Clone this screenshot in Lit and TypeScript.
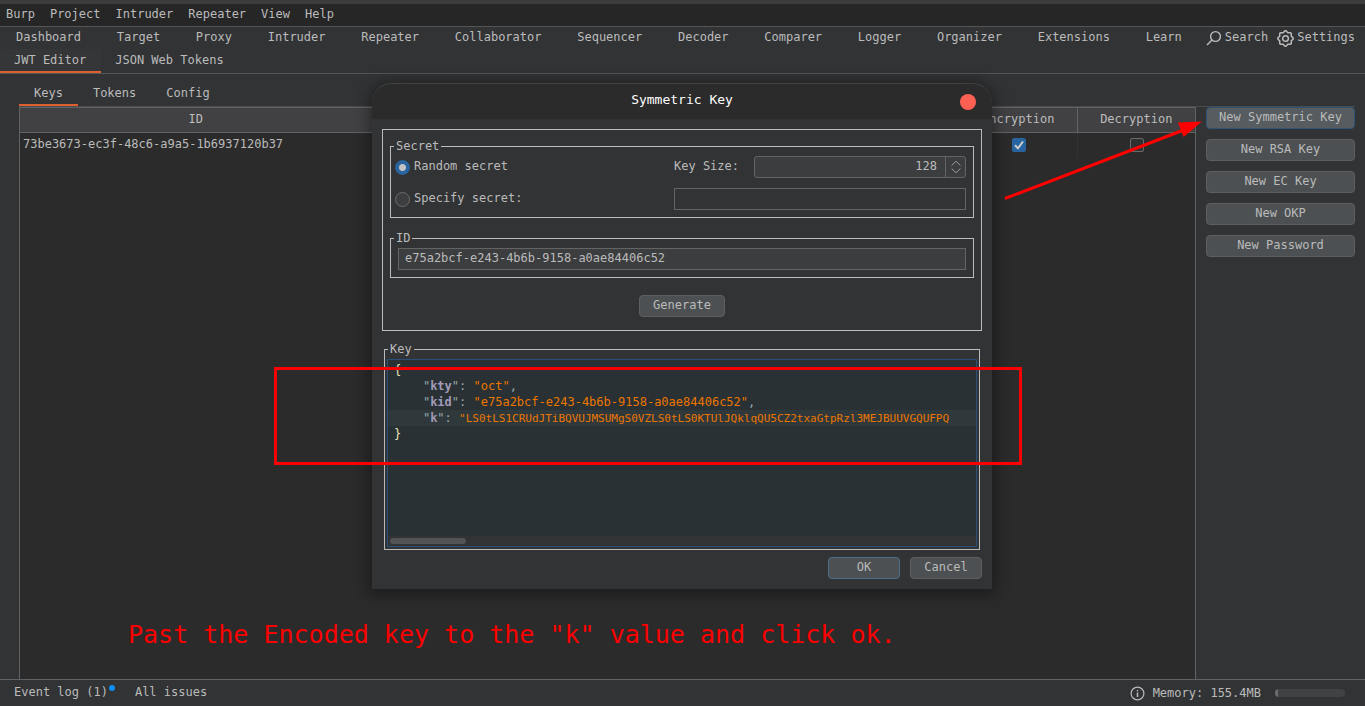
import { LitElement, html, css, svg } from "lit";
import { customElement, state } from "lit/decorators.js";

const MENUS = ["Burp", "Project", "Intruder", "Repeater", "View", "Help"];
const TOOLS = [
  "Dashboard", "Target", "Proxy", "Intruder", "Repeater", "Collaborator", "Sequencer",
  "Decoder", "Comparer", "Logger", "Organizer", "Extensions", "Learn",
];
const EXTENSION_TABS = ["JWT Editor", "JSON Web Tokens"];
const EDITOR_TABS = ["Keys", "Tokens", "Config"];
const NEW_KEY_BUTTONS = ["New Symmetric Key", "New RSA Key", "New EC Key", "New OKP", "New Password"];
const KEY_ID = "e75a2bcf-e243-4b6b-9158-a0ae84406c52";
const KEY_VALUE = "LS0tLS1CRUdJTiBQVUJMSUMgS0VZLS0tLS0KTUlJQklqQU5CZ2txaGtpRzl3MEJBUUVGQUFPQ";

// Eight-lobed cog outline around a 16px box.
const cogPath = (() => {
  const points: string[] = [];
  for (let i = 0; i <= 64; i++) {
    const a = (i / 64) * Math.PI * 2;
    const r = 6.6 + 0.7 * Math.cos(a * 8);
    points.push(`${(8 + r * Math.cos(a)).toFixed(2)} ${(8 + r * Math.sin(a)).toFixed(2)}`);
  }
  return `M${points.join("L")}Z`;
})();

const controls = css`
  * { box-sizing: border-box; }
  button, input {
    font: inherit;
    color: inherit;
    margin: 0;
  }
  .btn {
    height: 22px;
    padding: 0 0 2px;
    background: #4c5052;
    border: 1px solid #5e6060;
    border-radius: 4px;
  }
  .btn.focused {
    background: #565c5f;
    border-color: #2d5478;
  }
  .btn.default { border-color: #4c708c; }
`;

@customElement("key-dialog")
export class KeyDialog extends LitElement {
  static styles = [
    controls,
    css`
      :host {
        display: block;
        position: relative;
        width: 620px;
        background: #323335;
        border-radius: 20px 20px 0 0;
        box-shadow: 0 2px 14px 4px rgba(0, 0, 0, 0.34);
      }
      .title {
        display: grid;
        grid-template-columns: 1fr auto 1fr;
        align-items: center;
        height: 36px;
        padding: 0 16px;
        background: #2b2b2b;
        border-top: 1px solid #404242;
        border-radius: 20px 20px 0 0;
      }
      h1 {
        grid-column: 2;
        margin: 0;
        padding-bottom: 3px;
        font-size: 13px;
        line-height: 16px;
        font-weight: 400;
        color: #fff;
      }
      .close {
        justify-self: end;
        width: 16px;
        height: 16px;
        padding: 0;
        border: 0;
        border-radius: 50%;
        background: #ff6054;
      }
      .body { padding: 10px; }
      .panel {
        display: flex;
        flex-direction: column;
        padding: 9px 7px 13px;
        border: 1px solid #bbb;
      }
      fieldset {
        min-width: 0;
        margin: 0;
        padding: 2px 7px 7px 3px;
        border: 1px solid #bbb;
      }
      legend {
        padding: 0 2px;
        line-height: 15px;
      }
      .secret {
        display: grid;
        grid-template-columns: 1fr 80px 212px;
        row-gap: 10px;
        align-items: center;
      }
      .radio {
        display: flex;
        align-items: center;
        gap: 4px;
        padding-left: 1px;
      }
      .radio input {
        appearance: none;
        width: 15px;
        height: 15px;
        border: 1px solid #6b6b6b;
        border-radius: 50%;
        background: #3c3e3f;
      }
      .radio input:checked {
        border-color: #2a65a0;
        background: radial-gradient(circle, #c4c4c4 3px, #2a65a0 4px);
      }
      .radio span, .label { padding-bottom: 2px; line-height: 16px; }
      .spinner {
        display: flex;
        height: 22px;
        border: 1px solid #646464;
        border-radius: 3px;
        background: #3c3d3f;
      }
      .spinner input {
        flex: 1;
        min-width: 0;
        padding: 0 8px 2px;
        border: 0;
        background: none;
        text-align: right;
      }
      .steps {
        display: grid;
        place-items: center;
        width: 20px;
        padding: 0;
        border: 0;
        border-left: 1px solid #646464;
        background: none;
      }
      .field {
        display: block;
        width: 100%;
        height: 22px;
        padding: 0 6px 2px;
        border: 1px solid #646464;
        border-radius: 0;
        background: #3c3d3f;
      }
      .field.disabled {
        grid-column: 2 / 4;
        background: #323335;
      }
      .id { margin-top: 13px; }
      .id .wrap { padding-left: 4px; }
      .generate {
        align-self: center;
        width: 86px;
        margin-top: 17px;
      }
      .key {
        margin: 11px 2px 0;
        padding: 2px;
      }
      .key legend { margin-left: 1px; }
      .editor {
        border: 1px solid #28507a;
        background: #293134;
      }
      .code {
        height: 176px;
        padding-top: 2px;
        overflow: hidden;
        font: 12px/16px "DejaVu Sans Mono", monospace;
        white-space: pre;
        color: #9aa8b0;
        outline: none;
      }
      .line { height: 16px; padding-left: 6px; overflow: hidden; }
      .line.current { background: #2f393c; }
      .brace { color: #e8e2b7; }
      .name { color: #a29ab8; font-weight: 700; }
      .value { color: #ec7600; }
      .value.long { font-size: 11px; }
      .track {
        height: 10px;
        padding: 2px;
        background: #323335;
      }
      .thumb {
        width: 76px;
        height: 6px;
        border-radius: 3px;
        background: #525355;
      }
      .actions {
        display: flex;
        justify-content: flex-end;
        gap: 10px;
        margin-top: 7px;
      }
      .actions .btn { width: 72px; }
      .highlight {
        position: absolute;
        top: 284px;
        left: -98px;
        right: -30px;
        height: 98px;
        border: 3px solid #fb0000;
        pointer-events: none;
      }
    `,
  ];

  render() {
    return html`
      <header class="title">
        <h1>Symmetric Key</h1>
        <button class="close" aria-label="Close"></button>
      </header>
      <div class="body">
        <div class="panel">
          <fieldset>
            <legend>Secret</legend>
            <div class="secret">
              <label class="radio"><input type="radio" name="secret" checked /><span>Random secret</span></label>
              <label class="label" for="size">Key Size:</label>
              <div class="spinner">
                <input id="size" type="text" inputmode="numeric" .value=${"128"} />
                <button class="steps" aria-label="Change key size">
                  <svg width="10" height="14" viewBox="0 0 10 14" fill="none" stroke="#a0a0a0">
                    <path d="M.7 5.500 5 1.200 9.300 5.500M.7 8.500 5 12.800 9.300 8.500" />
                  </svg>
                </button>
              </div>
              <label class="radio"><input type="radio" name="secret" /><span>Specify secret:</span></label>
              <input class="field disabled" type="text" aria-label="Specify secret" disabled />
            </div>
          </fieldset>
          <fieldset class="id">
            <legend>ID</legend>
            <div class="wrap"><input class="field" type="text" aria-label="ID" .value=${KEY_ID} /></div>
          </fieldset>
          <button class="btn generate">Generate</button>
        </div>
        <fieldset class="key">
          <legend>Key</legend>
          <div class="editor">
            <div class="code" role="textbox" aria-multiline="true" aria-label="Key" contenteditable="true" spellcheck="false"
              ><div class="line"><span class="brace">{</span></div
              ><div class="line">    "<span class="name">kty</span>": <span class="value">"oct"</span>,</div
              ><div class="line">    "<span class="name">kid</span>": <span class="value">"${KEY_ID}"</span>,</div
              ><div class="line current">    "<span class="name">k</span>": <span class="value long">"${KEY_VALUE}</span></div
              ><div class="line"><span class="brace">}</span></div
            ></div>
            <div class="track"><div class="thumb"></div></div>
          </div>
        </fieldset>
        <div class="actions">
          <button class="btn default">OK</button>
          <button class="btn">Cancel</button>
        </div>
      </div>
      <div class="highlight"></div>
    `;
  }
}

@customElement("app-root")
export class AppRoot extends LitElement {
  static styles = [
    controls,
    css`
      :host {
        display: flex;
        flex-direction: column;
        position: relative;
        height: 100vh;
        overflow: hidden;
        border-top: 4px solid #3c3c3c;
        box-sizing: border-box;
        background: #323335;
        color: #bbb;
        font: 12px/16px "DejaVu Sans Mono", monospace;
      }
      button { cursor: default; }
      .menus, .tools, .tabs, .editor-tabs, .status {
        display: flex;
        align-items: center;
      }
      .menus button, .tools button, .tabs button, .editor-tabs button, .status button {
        padding: 0;
        border: 0;
        background: none;
        white-space: nowrap;
      }
      .menus {
        gap: 15px;
        height: 23px;
        padding: 0 6px 2px;
        background: #262626;
        border-bottom: 1px solid #555;
      }
      .tools { height: 22px; }
      .tool-list {
        display: flex;
        flex: 1;
        justify-content: space-between;
        padding: 0 24px 2px 16px;
      }
      .side-tools {
        display: flex;
        gap: 9px;
        padding-right: 10px;
      }
      .side-tools button {
        display: flex;
        align-items: center;
        gap: 3px;
      }
      .side-tools span { padding-bottom: 2px; }
      .tabs {
        align-items: stretch;
        height: 25px;
        border-bottom: 1px solid #555;
      }
      .tabs button {
        padding: 0 15px 0 14px;
        border-bottom: 2px solid transparent;
      }
      .tabs button.active {
        border-color: #dd6031;
        background: #353638;
      }
      .workspace {
        display: flex;
        flex: 1;
        flex-direction: column;
        min-height: 0;
        padding-left: 19px;
      }
      .editor-tabs {
        align-items: stretch;
        height: 33px;
        margin-right: 10px;
        padding-top: 8px;
        border-bottom: 1px solid #4a4b4d;
      }
      .editor-tabs button {
        padding: 0 15px;
        border-bottom: 2px solid transparent;
      }
      .editor-tabs button.active { border-color: #dd6031; }
      .content { display: flex; flex: 1; }
      .keys {
        flex: 1;
        border: 1px solid #606264;
        border-bottom: 0;
        background: #2b2b2b;
      }
      table {
        width: 100%;
        table-layout: fixed;
        border-collapse: separate;
        border-spacing: 0;
      }
      th, td {
        height: 25px;
        padding: 0 0 2px;
        border-right: 1px solid #333;
        font-weight: 400;
        line-height: 16px;
        text-align: center;
      }
      th {
        background: #414143;
        border-right-color: #606264;
        border-bottom: 1px solid #606264;
      }
      th:last-child, td:last-child { border-right: 0; }
      th:first-child { width: 30%; }
      td:first-child { padding: 0 0 4px 3px; text-align: left; }
      .tick {
        appearance: none;
        display: block;
        width: 14px;
        height: 14px;
        margin: 1px auto 0;
        border: 1px solid #6b6b6b;
        border-radius: 2px;
        background: #303132;
      }
      .tick:checked {
        border-color: #2865a0;
        background: #2865a0;
      }
      .tick-box { position: relative; margin-left: 2px; }
      .tick-box svg {
        position: absolute;
        inset: 0;
        margin: auto;
        pointer-events: none;
      }
      aside {
        position: relative;
        display: flex;
        flex-direction: column;
        gap: 10px;
        width: 169px;
        padding: 0 10px;
      }
      .arrow {
        position: absolute;
        top: 12px;
        right: 160px;
        pointer-events: none;
      }
      .status {
        height: 27px;
        padding: 0 20px 0 14px;
        border-top: 1px solid #606264;
      }
      .issues {
        display: flex;
        flex: 1;
        gap: 27px;
        padding-bottom: 2px;
      }
      .badge-host { position: relative; }
      .dot {
        position: absolute;
        top: 1px;
        right: -7px;
        width: 6px;
        height: 6px;
        border-radius: 50%;
        background: #0a8df5;
      }
      .memory { display: flex; align-items: center; gap: 8px; }
      .meter {
        width: 70px;
        height: 8px;
        margin-left: 6px;
        border-radius: 4px;
        overflow: hidden;
        background: #414244;
      }
      .meter div { height: 100%; width: 4%; background: #6b6c6e; }
      .overlay {
        position: absolute;
        top: 79px;
        left: 0;
        right: 1px;
        display: flex;
        justify-content: center;
      }
      .caption {
        position: absolute;
        left: 128px;
        bottom: 54px;
        margin: 0;
        font-size: 25px;
        line-height: 34px;
        color: #fb0000;
        white-space: nowrap;
      }
    `,
  ];

  @state() private activeTab = "Keys";

  render() {
    return html`
      <nav class="menus">${MENUS.map((m) => html`<button>${m}</button>`)}</nav>
      <nav class="tools">
        <div class="tool-list">${TOOLS.map((t) => html`<button>${t}</button>`)}</div>
        <div class="side-tools">
          <button>
            <svg width="16" height="16" viewBox="0 0 16 16" fill="none" stroke="#bbb" stroke-width="1.400">
              <circle cx="9.500" cy="6.500" r="4.900" /><path d="M6 10 1 15" />
            </svg>
            <span>Search</span>
          </button>
          <button>
            <svg width="17" height="17" viewBox="0 0 16 16" fill="none" stroke="#bbb" stroke-width="1.400">
              ${svg`<path d=${cogPath} />`}<circle cx="8" cy="8" r="2.700" />
            </svg>
            <span>Settings</span>
          </button>
        </div>
      </nav>
      <nav class="tabs">
        ${EXTENSION_TABS.map((t, i) => html`<button class=${i === 0 ? "active" : ""}>${t}</button>`)}
      </nav>
      <main class="workspace">
        <nav class="editor-tabs">
          ${EDITOR_TABS.map(
            (t) => html`<button class=${t === this.activeTab ? "active" : ""} @click=${() => (this.activeTab = t)}>${t}</button>`,
          )}
        </nav>
        <div class="content">
          <div class="keys">
            <table>
              <thead>
                <tr><th>ID</th><th></th><th></th><th></th><th></th><th></th><th>Encryption</th><th>Decryption</th></tr>
              </thead>
              <tbody>
                <tr>
                  <td>73be3673-ec3f-48c6-a9a5-1b6937120b37</td>
                  <td></td><td></td><td></td><td></td><td></td>
                  <td>
                    <div class="tick-box">
                      <input class="tick" type="checkbox" aria-label="Encryption" checked />
                      <svg width="14" height="14" viewBox="0 0 14 14" fill="none" stroke="#d0d0d0" stroke-width="2">
                        <path d="M3 7.300 6 10.300 11 3.500" />
                      </svg>
                    </div>
                  </td>
                  <td><div class="tick-box"><input class="tick" type="checkbox" aria-label="Decryption" /></div></td>
                </tr>
              </tbody>
            </table>
          </div>
          <aside>
            ${NEW_KEY_BUTTONS.map((b, i) => html`<button class="btn ${i === 0 ? "focused" : ""}">${b}</button>`)}
            <svg class="arrow" width="202" height="84" viewBox="0 0 202 84">
              <path d="M2 79.500 182 10.500" stroke="#f00" stroke-width="3" />
              <path d="M175 3.500 199 2.500 180.500 18Z" fill="#f00" />
            </svg>
          </aside>
        </div>
      </main>
      <footer class="status">
        <div class="issues">
          <button class="badge-host">Event log (1)<span class="dot"></span></button>
          <button>All issues</button>
        </div>
        <div class="memory">
          <svg width="15" height="15" viewBox="0 0 15 15" fill="none" stroke="#bbb" stroke-width="1.200">
            <circle cx="7.500" cy="7.500" r="6.400" /><path d="M7.500 6.500V11M7.500 4V5.300" stroke-width="1.500" />
          </svg>
          <span>Memory: 155.4MB</span>
          <div class="meter"><div></div></div>
        </div>
      </footer>
      <p class="caption">Past the Encoded key to the "k" value and click ok.</p>
      <div class="overlay"><key-dialog></key-dialog></div>
    `;
  }
}
